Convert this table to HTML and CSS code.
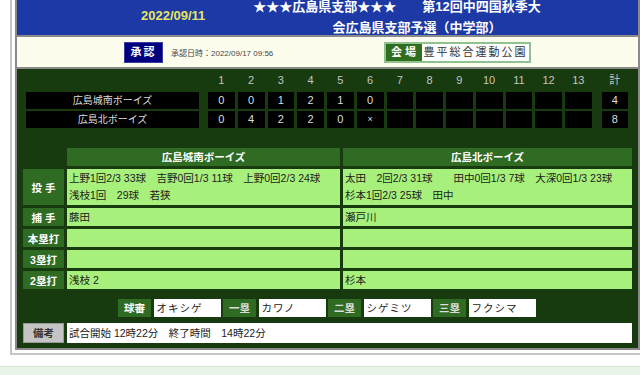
FILE: index.html
```html
<!DOCTYPE html>
<html lang="ja">
<head>
<meta charset="utf-8">
<title>試合結果</title>
<link rel="stylesheet" href="styles.css">
</head>
<body>
<div class="page">
  <div class="outer">
    <div class="frame">
      <div class="title-bar">
        <div class="game-date">2022/09/11</div>
        <div class="game-title">
          <span class="title-line">★★★広島県支部★★★　　第12回中四国秋季大</span>
          <span class="title-line second">会広島県支部予選（中学部）</span>
        </div>
      </div>
      <div class="info-bar">
        <span class="approved">承認</span>
        <span class="approved-at">承認日時：2022/09/17 09:56</span>
        <div class="venue"><span class="venue-label">会場</span><span class="venue-name">豊平総合運動公園</span></div>
      </div>
      <div class="board">
        <div class="score">
          <div class="score-row score-head">
            <span class="team"></span>
            <span class="inn">1</span><span class="inn">2</span><span class="inn">3</span><span class="inn">4</span><span class="inn">5</span><span class="inn">6</span><span class="inn">7</span><span class="inn">8</span><span class="inn">9</span><span class="inn">10</span><span class="inn">11</span><span class="inn">12</span><span class="inn">13</span>
            <span class="total">計</span>
          </div>
          <div class="score-row">
            <span class="team">広島城南ボーイズ</span>
            <span class="inn">0</span><span class="inn">0</span><span class="inn">1</span><span class="inn">2</span><span class="inn">1</span><span class="inn">0</span><span class="inn"></span><span class="inn"></span><span class="inn"></span><span class="inn"></span><span class="inn"></span><span class="inn"></span><span class="inn"></span>
            <span class="total">4</span>
          </div>
          <div class="score-row">
            <span class="team">広島北ボーイズ</span>
            <span class="inn">0</span><span class="inn">4</span><span class="inn">2</span><span class="inn">2</span><span class="inn">0</span><span class="inn x">×</span><span class="inn"></span><span class="inn"></span><span class="inn"></span><span class="inn"></span><span class="inn"></span><span class="inn"></span><span class="inn"></span>
            <span class="total">8</span>
          </div>
        </div>

        <div class="details">
          <div class="corner"></div>
          <div class="team-head">広島城南ボーイズ</div>
          <div class="team-head">広島北ボーイズ</div>

          <div class="label">投 手</div>
          <div class="cell multi">上野1回2/3 33球　吉野0回1/3 11球　上野0回2/3 24球<br>浅枝1回　29球　若狭</div>
          <div class="cell multi">太田　2回2/3 31球　　田中0回1/3 7球　大深0回1/3 23球<br>杉本1回2/3 25球　田中</div>

          <div class="label">捕 手</div>
          <div class="cell">藤田</div>
          <div class="cell">瀬戸川</div>

          <div class="label">本塁打</div>
          <div class="cell"></div>
          <div class="cell"></div>

          <div class="label">3塁打</div>
          <div class="cell"></div>
          <div class="cell"></div>

          <div class="label">2塁打</div>
          <div class="cell">浅枝 2</div>
          <div class="cell">杉本</div>
        </div>

        <div class="umpires">
          <span class="ump-label main">球審</span><span class="ump-name">オキシゲ</span>
          <span class="ump-label">一塁</span><span class="ump-name">カワノ</span>
          <span class="ump-label">二塁</span><span class="ump-name">シゲミツ</span>
          <span class="ump-label">三塁</span><span class="ump-name">フクシマ</span>
        </div>

        <div class="remarks">
          <span class="remarks-label">備考</span>
          <span class="remarks-text">試合開始 12時22分　終了時間　14時22分</span>
        </div>
      </div>
    </div>
  </div>
</div>
<div class="band"></div>
</body>
</html>
```
FILE: styles.css
```css
* { box-sizing: border-box; }
html, body { margin: 0; padding: 0; }
body {
  width: 640px;
  height: 375px;
  overflow: hidden;
  background: #ffffff;
  font-family: "Liberation Sans", "Noto Sans CJK JP", sans-serif;
  color: #222;
}
.page { margin-top: -7px; padding-left: 10px; }
.outer {
  width: 700px;
  border-left: 2px solid #c6c6c6;
  border-bottom: 2px solid #c6c6c6;
  padding: 0 0 3px 3px;
}
.frame {
  width: 625px;
  border: 2px solid #8a8a8a;
}

/* title */
.title-bar {
  display: flex;
  align-items: flex-start;
  height: 42px;
  background: #1c39a6;
  border-bottom: 2px solid #8a8a8a;
}
.game-date {
  align-self: center;
  width: 200px;
  padding-left: 124px;
  color: #e6e65e;
  font-weight: bold;
  font-size: 13px;
}
.game-title {
  width: 360px;
  padding-top: 1px;
  text-align: center;
  color: #ffffff;
  font-weight: bold;
  font-size: 13px;
  line-height: 21px;
  white-space: nowrap;
}
.title-line { display: block; }
.title-line.second { padding-left: 40px; }

/* info */
.info-bar {
  display: flex;
  align-items: center;
  height: 32px;
  padding: 0 107px;
  background: #fdfdee;
  border-bottom: 2px solid #8a8a8a;
}
.approved {
  width: 39px;
  height: 21px;
  line-height: 19px;
  text-align: center;
  background: #00007f;
  border: 1px solid #3a3aa0;
  color: #fff;
  font-weight: bold;
  font-size: 11px;
  letter-spacing: 2px;
}
.approved-at {
  margin-left: 8px;
  font-size: 8px;
  color: #444;
}
.venue {
  margin-left: auto;
  display: flex;
  height: 21px;
  border: 2px solid #8fc28f;
}
.venue-label {
  width: 36px;
  line-height: 17px;
  text-align: center;
  background: #2e6e1e;
  color: #fff;
  font-weight: bold;
  font-size: 11px;
  letter-spacing: 3px;
  padding-left: 2px;
}
.venue-name {
  width: 107px;
  line-height: 17px;
  text-align: center;
  background: #fff;
  color: #333;
  font-size: 11px;
  letter-spacing: 2px;
}

/* board */
.board {
  background: #173b0f;
  padding: 2px 6px 5px;
}
.score { margin-left: 3px; }
.score-row {
  display: flex;
  gap: 3px;
  height: 17px;
  margin-top: 2px;
}
.score-row.score-head {
  height: 18px;
  margin-top: 0;
  margin-bottom: 3px;
}
.score-row > span {
  display: block;
  background: #000;
  color: #dedede;
  text-align: center;
  line-height: 17px;
  font-size: 11px;
}
.score-head > span {
  background: transparent;
  color: #c4c4c4;
  line-height: 18px;
}
.team {
  width: 173px;
  margin-right: 6px;
  font-size: 10px !important;
}
.inn { width: 26.75px; }
.inn.x { font-size: 9px !important; }
.total { width: 26px; margin-left: 7px; }

.details {
  display: grid;
  grid-template-columns: 41px 273px 289px;
  grid-template-rows: 18px 36px 18px 18px 18px 18px;
  gap: 3px;
  margin-top: 20px;
}
.team-head {
  background: #2f6b22;
  color: #fff;
  font-weight: bold;
  font-size: 10.5px;
  line-height: 18px;
  text-align: center;
}
.label {
  background: #2f6b22;
  color: #fff;
  font-weight: bold;
  font-size: 10.5px;
  display: flex;
  align-items: center;
  justify-content: center;
}
.cell {
  background: #a8f07c;
  color: #1c1c1c;
  font-size: 10.5px;
  line-height: 18px;
  padding-left: 2px;
  white-space: nowrap;
  overflow: hidden;
}
.cell.multi { line-height: 17px; padding-top: 1px; }

.umpires {
  display: flex;
  gap: 2.5px;
  height: 18px;
  margin-top: 10px;
  margin-left: 95px;
}
.ump-label {
  width: 33px;
  background: #2f6b22;
  color: #dcdcdc;
  font-weight: bold;
  font-size: 10.5px;
  line-height: 18px;
  text-align: center;
}
.ump-label.main { color: #fff; }
.ump-name {
  width: 67px;
  background: #fff;
  color: #222;
  font-size: 10.5px;
  line-height: 18px;
  padding-left: 3px;
  letter-spacing: 1px;
}

.remarks {
  display: flex;
  gap: 3px;
  height: 20px;
  margin-top: 6px;
}
.remarks-label {
  width: 41px;
  background: #c4c4c4;
  border: 1px solid #9a9a9a;
  color: #333;
  font-weight: bold;
  font-size: 10.5px;
  line-height: 18px;
  text-align: center;
}
.remarks-text {
  flex: 1;
  background: #fff;
  color: #222;
  font-size: 10.5px;
  line-height: 20px;
  padding-left: 2px;
}

.band {
  margin-top: 11px;
  height: 20px;
  background: #e7f4e7;
  border-top: 1px solid #d0e6d0;
}
```
